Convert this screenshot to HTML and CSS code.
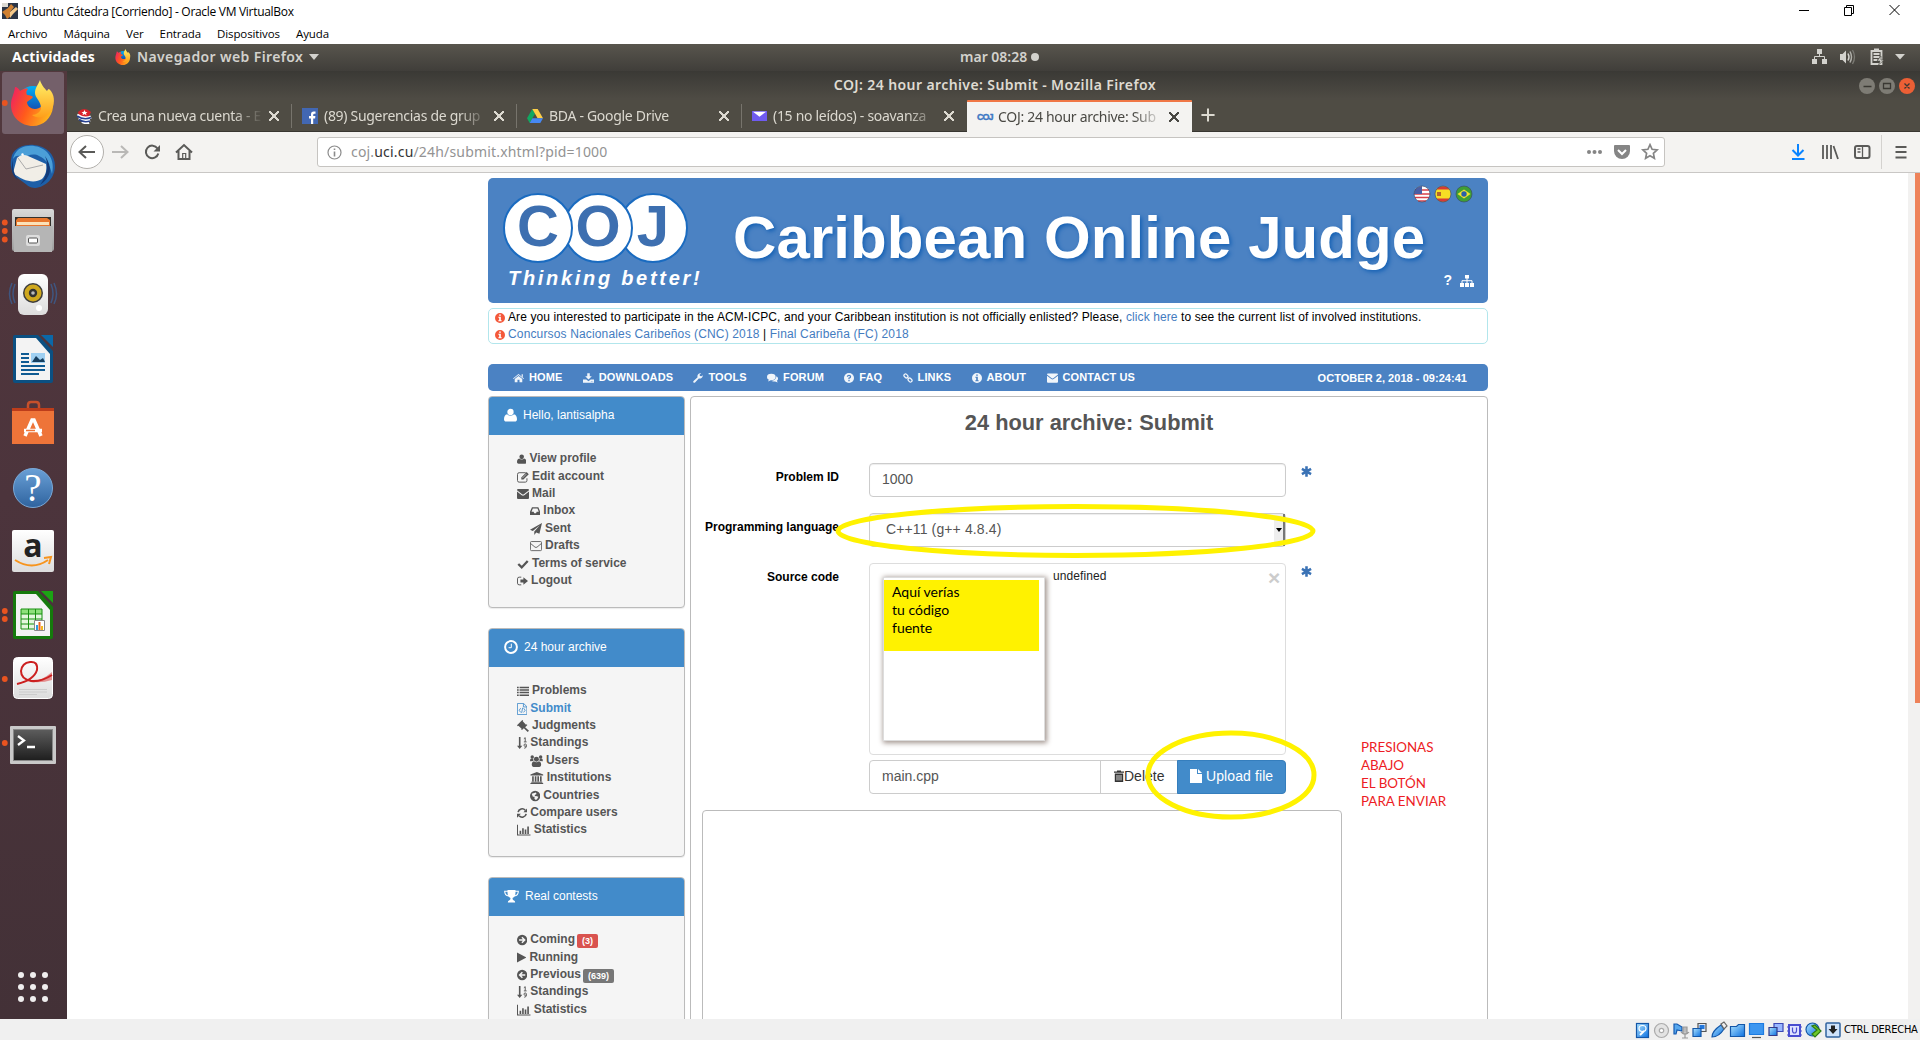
FILE: index.html
```html
<!DOCTYPE html>
<html lang="es">
<head>
<meta charset="utf-8">
<title>COJ: 24 hour archive: Submit</title>
<link rel="stylesheet" href="styles.css">
</head>
<body>
<svg class="sprite" aria-hidden="true">
  <defs>
    <linearGradient id="gf" x1="0" y1="0.2" x2="1" y2="0.6"><stop offset="0" stop-color="#f0245e"/><stop offset=".45" stop-color="#ff5a1c"/><stop offset="1" stop-color="#ffb81c"/></linearGradient>
    <linearGradient id="gy" x1="0" y1="0" x2="0" y2="1"><stop offset="0" stop-color="#fff36a"/><stop offset="1" stop-color="#ff9f1a"/></linearGradient>
    <linearGradient id="gb" x1="0" y1="0" x2="0" y2="1"><stop offset="0" stop-color="#00b1f6"/><stop offset="1" stop-color="#1c2f9c"/></linearGradient>
    <linearGradient id="gg" x1="0" y1="0" x2="0" y2="1"><stop offset="0" stop-color="#d9d9d9"/><stop offset="1" stop-color="#9c9c9c"/></linearGradient>
    <linearGradient id="gw" x1="0" y1="0" x2="0" y2="1"><stop offset="0" stop-color="#fff"/><stop offset="1" stop-color="#dcdcdc"/></linearGradient>
    <linearGradient id="gh" x1="0" y1="0" x2="0" y2="1"><stop offset="0" stop-color="#6aa0d6"/><stop offset="1" stop-color="#2f639f"/></linearGradient>
    <linearGradient id="gv" x1="0" y1="0" x2="1" y2="1"><stop offset="0" stop-color="#aee4ff"/><stop offset="1" stop-color="#0b6fe0"/></linearGradient>
    <linearGradient id="gt" x1="0" y1="0" x2="0" y2="1"><stop offset="0" stop-color="#5c5c5c"/><stop offset="1" stop-color="#1f1f1f"/></linearGradient>
  </defs>
  <symbol id="firefox" viewBox="0 0 44 46">
    <circle cx="22" cy="22" r="16" fill="url(#gb)"/>
    <path d="M4 7c2 0 4 2 5 4 3-2 6-3 8-2-2 2-2 4-1 6 3 0 5 1 6 2-1 2-4 3-6 5 0 4 4 7 8 7 5 0 9-4 8-9l-1-12 6 4c4 5 6 10 5 15-1 11-10 19-20 19C10 46 0 37 0 25 0 18 3 15 4 7z" fill="url(#gf)"/>
    <path d="M29 0c-2 5-5 8-5 13 0 5 6 8 6 15 0 4-5 7-9 7 6 5 16 2 20-6 3-6 3-15-3-20-1 0-2 2-2 2S30 5 29 0z" fill="url(#gy)"/>
  </symbol>
  <symbol id="user" viewBox="0 0 14 14"><circle cx="7" cy="3.8" r="3.4"/><path d="M3.4 6.3C5 8.4 9 8.4 10.600 6.300 13 6.700 14 9 14 11.500c0 1.500-1 2.500-2.300 2.500H2.300C1 14 0 13 0 11.500 0 9 1 6.700 3.400 6.300z"/></symbol>
  <symbol id="edit" viewBox="0 0 14 14"><path d="M10.200 2H2.500A1.900 1.900 0 0 0 .6 3.900v7.200A1.900 1.900 0 0 0 2.500 13h7.200a1.900 1.900 0 0 0 1.900-1.900V8.500" fill="none" stroke="currentColor" stroke-width="1.100"/><path d="M5 10V7.500L11.200 1.300l2.500 2.500L7.500 10z"/><path d="M6.300 8.300l4.600-4.700" stroke="#f5f5f5" stroke-width=".7"/></symbol>
  <symbol id="mail" viewBox="0 0 14 12"><path d="M0 1.500Q0 .3 1.200.3h11.600Q14 .3 14 1.500L8 6.200q-1 .7-2 0z"/><path d="M0 3.200l5.500 4.200q1.500 1 3 0L14 3.200v7.500q0 1.200-1.200 1.200H1.200Q0 11.900 0 10.700z"/></symbol>
  <symbol id="mailo" viewBox="0 0 14 12"><rect x=".5" y=".8" width="13" height="10.600" rx="1.200" fill="none" stroke="currentColor"/><path d="M.6 3l5.200 4.300q1.200.8 2.400 0L13.400 3" fill="none" stroke="currentColor"/></symbol>
  <symbol id="inbox" viewBox="0 0 12 12"><path fill-rule="evenodd" d="M2.300 1.500h7.400L12 7v3.700H0V7zm1 1.500L1.800 7h2.400l.8 1.600h2L7.800 7h2.400L8.700 3z"/></symbol>
  <symbol id="plane" viewBox="0 0 14 14"><path d="M14 0L0 8l3.300 1.400L11.500 2.500 5 10v4l2.200-3 3.800 1.500z"/></symbol>
  <symbol id="check" viewBox="0 0 14 12"><path d="M1.500 6l4 4 7-7.500" fill="none" stroke="currentColor" stroke-width="2.700"/></symbol>
  <symbol id="signout" viewBox="0 0 13 12"><path d="M5 1.500H2.500Q.6 1.500.6 3.500v5q0 2 1.900 2H5" fill="none" stroke="currentColor" stroke-width="1.100"/><path d="M4 4.200h3.500V1.500L13 6l-5.500 4.500V7.800H4z"/></symbol>
  <symbol id="clock" viewBox="0 0 14 14"><circle cx="7" cy="7" r="5.900" fill="none" stroke="currentColor" stroke-width="2"/><path d="M7.300 3.700v4H4.600" fill="none" stroke="currentColor"/></symbol>
  <symbol id="list" viewBox="0 0 14 12"><path d="M0 1h2v1.700H0zM3 1h11v1.700H3zM0 4h2v1.700H0zM3 4h11v1.700H3zM0 7h2v1.700H0zM3 7h11v1.700H3zM0 10h2v1.700H0zM3 10h11v1.700H3z"/></symbol>
  <symbol id="code" viewBox="0 0 12 14"><path d="M.5.5h7.200l3.800 3.800v9.200H.5zM7.500.6v4h4M4.300 6L2.500 8.500 4.300 11M7.700 6l1.800 2.500L7.700 11M6.600 5.500l-1.200 6" fill="none" stroke="currentColor"/></symbol>
  <symbol id="gavel" viewBox="0 0 14 14"><path d="M0 6.200L6.200 0l1 1-.5.600 3.800 3.800.6-.5 1 1-2.600 2.600 4.500 4L12.500 14 8 9.700l-2.200 2-1-1 .6-.5L1.600 6.600l-.6.6z"/></symbol>
  <symbol id="sort" viewBox="0 0 12 14"><path d="M2.200 0h1.900v10.200h2.100L3.100 14 0 10.200h2.200z"/><path d="M8 2l1.600-1.200V5.500M8 5.700h3.200M11 10.400q-2.800 1.300-2.800-.8 0-1.500 1.400-1.500 1.500 0 1.500 2 0 3-2.700 3" fill="none" stroke="currentColor" stroke-width="1.100"/></symbol>
  <symbol id="users" viewBox="0 0 15 14"><circle cx="7.500" cy="5" r="2.900"/><path d="M4.600 7.300q2.900 2.200 5.800 0 2.600.5 2.600 4.200 0 2.500-2 2.500H4q-2 0-2-2.500 0-3.700 2.600-4.200z"/><circle cx="2.600" cy="2.400" r="2"/><circle cx="12.400" cy="2.400" r="2"/><path d="M0 7.200Q0 4.200 1.200 4.200h2.500L4 7zM15 7.200q0-3-1.200-3h-2.500L11 7z"/></symbol>
  <symbol id="bank" viewBox="0 0 15 14"><path d="M7.500 0L15 3v1H0V3zM2 5h1.900v6H2zM5.100 5H7v6H5.100zM8.100 5H10v6H8.100zM11.200 5h1.900v6h-1.900zM1 11.400h13v1H1zM0 12.800h15V14H0z"/></symbol>
  <symbol id="globe" viewBox="0 0 12 12"><path fill-rule="evenodd" d="M6 0a6 6 0 1 1 0 12A6 6 0 0 1 6 0zM2 3.500l1.200 3 2.200.7-.3 1.800 1 1.500 2-.3L9.800 7 7 6l-1.800.3L6 4.500l1.700-.8-1-1.700z"/></symbol>
  <symbol id="refresh" viewBox="0 0 12 12"><path d="M1.300 5A4.800 4.800 0 0 1 9.600 2.700M10.700 7a4.800 4.800 0 0 1-8.300 2.300" fill="none" stroke="currentColor" stroke-width="1.900"/><path d="M12 .5V5H7.500zM0 11.500V7h4.500z"/></symbol>
  <symbol id="bars" viewBox="0 0 16 14"><path d="M.6 1v11.800H16" fill="none" stroke="currentColor" stroke-width="1.200"/><path d="M3 8h1.900v3.600H3zM6 5h1.900v6.600H6zM9 6.500h1.900v5.100H9zM12 3h1.900v8.600H12z"/></symbol>
  <symbol id="trophy" viewBox="0 0 15 14"><path d="M3.500 1h8v2.500q0 4.500-3 5.500 0 2 1 2.300 1.700.2 1.700 2.200H3.800q0-2 1.700-2.200 1-.3 1-2.300-3-1-3-5.500z"/><path d="M4 2.300H.7q0 4.200 4 4.700M11 2.300h3.300q0 4.200-4 4.700" fill="none" stroke="currentColor" stroke-width="1.100"/></symbol>
  <symbol id="next" viewBox="0 0 12 12"><circle cx="6" cy="6" r="6"/><path d="M2.400 6h6.200M5.700 2.700L9 6 5.700 9.300" fill="none" stroke="#f5f5f5" stroke-width="1.700"/></symbol>
  <symbol id="prev" viewBox="0 0 12 12"><circle cx="6" cy="6" r="6"/><path d="M9.600 6H3.400M6.300 2.700L3 6l3.300 3.300" fill="none" stroke="#f5f5f5" stroke-width="1.700"/></symbol>
  <symbol id="play" viewBox="0 0 11 12"><path d="M0 0l11 6-11 6z"/></symbol>
  <symbol id="home" viewBox="0 0 14 12"><path d="M7 .8l7 5.700-.7.900L7 2.300.7 7.400 0 6.500zM11 1.300h1.500V5L11 3.700z"/><path d="M2.200 7.200L7 3.300l4.800 3.900v4.300H8.300V8.200H5.700v3.300H2.200z"/></symbol>
  <symbol id="download" viewBox="0 0 14 12"><path d="M5.400 0h3.200v3.800h2.600L7 8 2.800 3.800h2.600z"/><path fill-rule="evenodd" d="M0 7.800h4.200L7 10l2.800-2.200H14V12H0zm10 2.500h1.200v.9H10zm2 0h1v.9h-1z"/></symbol>
  <symbol id="wrench" viewBox="0 0 13 13"><path d="M12.700 3.300A3.900 3.900 0 0 1 7.500 7L2.700 12.300Q1.500 13.200.6 12.300-.2 11.300.7 10.300L6 5.500A3.900 3.900 0 0 1 9.700.3l1 .2L8.600 2l.3 2 2 .3 1.700-1.500z"/></symbol>
  <symbol id="chat" viewBox="0 0 14 12"><ellipse cx="5.500" cy="4.700" rx="5.500" ry="4"/><path d="M2.500 7.500L1.500 10.300 5.500 8.500z"/><path d="M12 3.800c3 2 2.200 4.500.6 5.700l1 2.300-3.300-1.400Q7 11 5 9.600 11.500 9.200 12 3.800z"/></symbol>
  <symbol id="quest" viewBox="0 0 12 12"><circle cx="6" cy="6" r="6"/><path d="M4 4.500Q4.200 2.800 6 2.800t1.900 1.600Q7.900 5.500 6 6.200V7.500" fill="none" stroke="#4b82c3" stroke-width="1.500"/><path d="M5.200 8.400h1.600V10H5.200z" fill="#4b82c3"/></symbol>
  <symbol id="link" viewBox="0 0 13 13"><g fill="none" stroke="currentColor" stroke-width="1.600"><rect x="-2.600" y="-2" width="5.600" height="4" rx="1.900" transform="translate(3.700 3.700) rotate(45)"/><rect x="-3" y="-2" width="5.600" height="4" rx="1.900" transform="translate(9.300 9.300) rotate(45)"/><path d="M5 5l3 3"/></g></symbol>
  <symbol id="info" viewBox="0 0 12 12"><path fill-rule="evenodd" d="M6 0a6 6 0 1 1 0 12A6 6 0 0 1 6 0zM5 1.700v1.700h2V1.700zM4 4.600v1.200h1v3H4V10h4V8.800H7V4.600z"/></symbol>
  <symbol id="sitemap" viewBox="0 0 14 12"><path d="M5 0h4v3.500H5zM0 8h4v4H0zM5 8h4v4H5zM10 8h4v4h-4z"/><path d="M7 3v5M2 8V5.700h10V8" fill="none" stroke="currentColor"/></symbol>
  <symbol id="aster" viewBox="0 0 12 12"><path d="M6 .3v11.400M1 3.200l10 5.600M11 3.200L1 8.800" fill="none" stroke="currentColor" stroke-width="2.800"/></symbol>
</svg>

<header class="vm">
  <div class="vm-title">
    <svg width="16" height="16" viewBox="0 0 16 16"><rect width="16" height="16" fill="#2b3546"/><path d="M0 9l6-4 3-4 3 3-4 5 1 4-4 3-2-4z" fill="#d08030"/><path d="M8 9l6-5 2 2-5 5-3 4z" fill="#f5c98a"/><path d="M0 0h6v4H0z" fill="#dcd9d2"/></svg>
    <span>Ubuntu Cátedra [Corriendo] - Oracle VM VirtualBox</span>
    <svg class="vm-btns" width="102" height="14" viewBox="0 0 102 14"><g fill="none" stroke="#000"><path d="M0 7.500h10M45.500 4.500h7v8h-7zM47.500 4.500v-2h7v8h-2M90.500 2l10 10M100.500 2l-10 10"/></g></svg>
  </div>
  <nav class="vm-menu"><span>Archivo</span><span>Máquina</span><span>Ver</span><span>Entrada</span><span>Dispositivos</span><span>Ayuda</span></nav>
</header>

<div class="gnome">
  <div class="g-left"><b>Actividades</b><svg width="16" height="16"><use href="#firefox"/></svg><span class="app">Navegador web Firefox</span><i class="caret"></i></div>
  <div class="g-mid">mar 08:28<i class="dot"></i></div>
  <svg class="g-right" width="94" height="18" viewBox="0 0 94 18">
    <g fill="#d3d2cd"><path d="M5 1h5v5H5zM0 11h5v5H0zM10 11h5v5h-5z"/><path d="M7.500 6v3M2.500 11V8.500h10V11" fill="none" stroke="#d3d2cd"/>
    <path d="M28 6h2.500L34 2.500v13L30.500 12H28z"/><path d="M36 5.500q2 3.500 0 7" fill="none" stroke="#d3d2cd" stroke-width="1.500"/><path d="M38 3.500q3 5.500 0 11" fill="none" stroke="#b0afa9" stroke-width="1.500"/><path d="M40.500 2q4 7 0 14" fill="none" stroke="#7b7a74" stroke-width="1.300"/>
    <path d="M59.500 3h10v13h-10zM62 1.500h5M61.500 6h6M61.500 9h6M61.500 12h4" fill="none" stroke="#d3d2cd" stroke-width="1.800"/><path d="M69 8l-4 5h3l-1.500 4L72 12h-3z" stroke="#4b4943" stroke-width=".6"/>
    <path d="M83 6h10l-5 5.500z"/></g>
  </svg>
</div>

<div class="desktop">
<aside class="dock">
  <svg width="67" height="947" viewBox="0 72 67 947">
    <rect x="2" y="72" width="62" height="62" rx="3" fill="#74606a"/>
    <g fill="#e95420"><circle cx="4.800" cy="103" r="2.900"/><circle cx="4.800" cy="222.500" r="2.900"/><circle cx="4.800" cy="231" r="2.900"/><circle cx="4.800" cy="239.500" r="2.900"/><circle cx="4.800" cy="611" r="2.900"/><circle cx="4.800" cy="619" r="2.900"/><circle cx="4.800" cy="679" r="2.900"/><circle cx="4.800" cy="743" r="2.900"/></g>
    <use href="#firefox" x="11" y="80" width="44" height="46"/>
    <g><path d="M12 155c3-7 12-11 22-10 13 1 21 10 21 21 0 12-9 21-20 22-5 0-8-3-8-3l-12-9c-5-6-5-14-3-21z" fill="#1d5fa8"/><path d="M21 148c7-4 19-3 26 4 5 6 7 12 5 22-2-9-6-15-13-18-5-3-12-1-16 3l-3-3c-3-1-5 0-7 3 1-5 4-9 8-11z" fill="#4b9fd8"/><path d="M13 173l4-15c3-3 7-4 11-2l18 8c1 6 0 11-4 15-8 5-19 2-29-6z" fill="#f1eee7"/><path d="M18 158l8 11 17-4" fill="none" stroke="#aaa" stroke-width="1"/><path d="M13 160q-1 12 5 20-9-6-5-20zM45 156q6 14-5 29 17-12 5-29z" fill="#123a78"/><circle cx="22.500" cy="154.500" r="1.200" fill="#fff"/></g>
    <g><rect x="12" y="209" width="42" height="42" rx="2" fill="url(#gg)"/><rect x="15" y="217" width="36" height="10" fill="#33302c"/><path d="M16 220l2-2h29l3 2v7H16z" fill="#e8762c"/><path d="M17 222h32v3H17z" fill="#fbe1b8"/><path d="M13 226h40l-1 26H14z" fill="#b5b5b5"/><rect x="26" y="235" width="14" height="11" rx="2" fill="#ddd"/><rect x="28.500" y="238" width="9" height="5" rx="1" fill="#fff" stroke="#555"/></g>
    <g><path d="M12 283q-5 11 0 21M15 284q-4 10 0 19M54 283q5 11 0 21M51 284q4 10 0 19" fill="none" stroke="#3f5680" stroke-width="1.500"/><rect x="18" y="274" width="30" height="41" rx="6" fill="url(#gw)"/><circle cx="33" cy="293" r="10" fill="#3d3d3d"/><circle cx="33" cy="293" r="8.500" fill="#cfa81e"/><circle cx="33" cy="293" r="4.200" fill="#333"/><circle cx="33" cy="293" r="1.800" fill="#bbb"/><circle cx="39" cy="308" r="3" fill="#fff"/></g>
    <g><path d="M13 337q0-2 2-2h23l15 16v30q0 2-2 2H15q-2 0-2-2z" fill="#0b5082"/><path d="M16 338h20l14 16v26H16z" fill="#f3f3f3"/><path d="M41 335h12v12z" fill="#0b68a8"/><path d="M21 354h8M21 358h8M21 362h8M21 366h24M21 370h24M21 374h18" stroke="#0f5b93" stroke-width="2"/><path d="M31 353h14v10H31z" fill="#9fd0f2"/><path d="M32 362l4-6 4 4 3-2 2 4z" fill="#173f5f"/></g>
    <g><path d="M28 411v-6q0-3 3-3h5q3 0 3 3v6" fill="none" stroke="#c7502b" stroke-width="2.500"/><path d="M12 408h42v4H12z" fill="#bd3d1b"/><path d="M12 411h42v33H12z" fill="#ee7439"/><path d="M25 436l7-16h2l7 16M24 430.500h18" fill="none" stroke="#fff" stroke-width="3.500"/><path d="M26 430.500h9" stroke="#ee7439" stroke-width="1.500"/></g>
    <g><circle cx="33" cy="488" r="19.500" fill="url(#gh)" stroke="#7aa9d8"/><text x="33" y="501" text-anchor="middle" class="q">?</text></g>
    <g><rect x="12" y="530" width="42" height="42" rx="2" fill="url(#gw)"/><text x="33" y="557" text-anchor="middle" class="a">a</text><path d="M15 560q17 11 33 0M44 558l7-1-2 7" fill="none" stroke="#f7941d" stroke-width="2"/></g>
    <g><path d="M13 593q0-2 2-2h23l15 16v30q0 2-2 2H15q-2 0-2-2z" fill="#157a0c"/><path d="M16 594h20l14 16v26H16z" fill="#f3f3f3"/><path d="M41 591h12v12z" fill="#1ca414"/><path d="M21 609h21v20H21z" fill="#e5f7df"/><path d="M21 609h21v5H21z" fill="#8fe07c"/><path d="M21 609h21v20H21zM28.500 609v20M35.500 609v20M21 614h21M21 619h21M21 624h21" fill="none" stroke="#189010"/><path d="M34.500 620.500h10v10h-10z" fill="#fff" stroke="#888"/><path d="M36 625h2v5h-2z" fill="#2f9be0"/><path d="M38.500 622h2v8h-2z" fill="#f0641e"/><path d="M41 626h2v4h-2z" fill="#f4b81e"/></g>
    <g><rect x="13.500" y="657.500" width="39" height="41" rx="4" fill="url(#gw)" stroke="#fff"/><path d="M24 681q13 4 28-9v8q-12 4-28 1z" fill="#e05050" opacity=".6"/><path d="M17 684q17-4 20-14 1-9-7-8-8 1-9 9 0 8 10 10 10 1 21-6" fill="none" stroke="#cc2020" stroke-width="2"/><path d="M19 689.500h28M19 692h28M19 694.500h18" stroke="#ccc"/></g>
    <g><rect x="10" y="726" width="46" height="38" rx="1" fill="#c9c9c9"/><rect x="13" y="729" width="40" height="32" fill="#888"/><rect x="14" y="730" width="38" height="30" fill="url(#gt)"/><path d="M18 736l6 4.500-6 4.500M27 747h8" fill="none" stroke="#fff" stroke-width="2.300"/></g>
    <g fill="#f0eeee"><circle cx="21" cy="975" r="3"/><circle cx="33" cy="975" r="3"/><circle cx="45" cy="975" r="3"/><circle cx="21" cy="987" r="3"/><circle cx="33" cy="987" r="3"/><circle cx="45" cy="987" r="3"/><circle cx="21" cy="999" r="3"/><circle cx="33" cy="999" r="3"/><circle cx="45" cy="999" r="3"/></g>
  </svg>
</aside>

<section class="browser">
  <div class="titlebar"><span>COJ: 24 hour archive: Submit - Mozilla Firefox</span>
    <svg width="58" height="18" viewBox="0 0 58 18"><circle cx="9" cy="9" r="8" fill="#7e7c75"/><circle cx="29" cy="9" r="8" fill="#7e7c75"/><circle cx="49" cy="9" r="8" fill="#ec5f35"/><path d="M5.500 9.500h8M25.500 6.500h7v5h-7zM46.500 6.500l5 5M51.500 6.500l-5 5" fill="none" stroke="#3a3833" stroke-width="1.300"/></svg>
  </div>
  <div class="tabs">
    <div class="tab"><svg width="15" height="16" viewBox="0 0 15 16"><path d="M1 4q6-6 13 0l-3 6q-5 1-9-2z" fill="#d9232b"/><path d="M7.500 2l1 2h2L9 5.300l.5 2-2-1.200-2 1.200.5-2L4.500 4h2z" fill="#fff"/><path d="M0 7q7 5 14 2M2 10q6 4 11 2M5 13.500q4 2 7 1" fill="none" stroke="#fff" stroke-width="3"/><path d="M0 8q7 4.500 14 1.500M2 11.500q5 3.500 11 1.500" fill="none" stroke="#27408f" stroke-width="1.600"/></svg><span>Crea una nueva cuenta - E</span><i class="x"></i></div>
    <div class="tab"><svg width="16" height="16" viewBox="0 0 16 16"><path d="M0 0h16v16H0z" fill="#4267b2"/><path d="M9 16v-5.500H7V8h2V6.300Q9 3.500 11.700 3.500H13.500v2.300H12.300q-1.100 0-1.100 1.100V8h2.200l-.3 2.500h-1.900V16z" fill="#fff"/></svg><span>(89) Sugerencias de grup</span><i class="x"></i></div>
    <div class="tab"><svg width="16" height="14" viewBox="0 0 16 14"><path d="M5.300 0L0 9.300 2.700 14 8 4.700z" fill="#11a861"/><path d="M5.300 0h5.400L16 9.300h-5.400z" fill="#ffcf48"/><path d="M2.700 14l2.700-4.700H16L13.300 14z" fill="#4688f4"/></svg><span>BDA - Google Drive</span><i class="x"></i></div>
    <div class="tab last"><svg width="15" height="10" viewBox="0 0 15 10"><path d="M0 0h15v10H0z" fill="#6f5bf0"/><path d="M1 .7h13L7.500 5.800z" fill="#fff"/></svg><span>(15 no leídos) - soavanza</span><i class="x"></i></div>
    <div class="tab active"><em>COJ</em><span>COJ: 24 hour archive: Sub</span><i class="x"></i></div>
    <i class="plus"></i>
  </div>
  <div class="toolbar">
    <svg width="138" height="40" viewBox="67 132 138 40"><g fill="none" stroke="#5a5a58" stroke-width="2"><circle cx="87" cy="152" r="16.500" fill="#fff" stroke="#b2b0ac" stroke-width="1"/><path d="M95 152H80M86 146l-6.500 6 6.500 6"/><path d="M112 152h15M121 146l6.500 6-6.500 6" stroke="#b9b8b6"/><path d="M157.500 148.500a6.300 6.300 0 1 0 .8 5"/><path d="M160 145v6.500h-6.500z" fill="#5a5a58" stroke="none"/><path d="M176 152.500l8-7.500 8 7.500M178.500 151v8h11v-8"/><path d="M182.700 153.500h3v5h-3z" stroke-width="1.200"/></g></svg>
    <div class="url"><svg width="15" height="15" viewBox="0 0 15 15"><circle cx="7.500" cy="7.500" r="6.500" fill="none" stroke="#8b8b8b" stroke-width="1.200"/><path d="M7.500 6.500v5M7.500 3.500v1.600" stroke="#8b8b8b" stroke-width="1.600"/></svg><span>coj.<b>uci.cu</b>/24h/submit.xhtml?pid=1000</span>
      <svg class="acts" width="74" height="18" viewBox="0 0 74 18"><g fill="#858585"><circle cx="3" cy="9" r="2"/><circle cx="8.500" cy="9" r="2"/><circle cx="14" cy="9" r="2"/><path d="M29 2h14q1 0 1 1v5a8 8 0 0 1-16 0V3q0-1 1-1z"/><path d="M32 7l4 4 4-4" fill="none" stroke="#fff" stroke-width="2"/><path d="M64 1.700l2.100 4.600 5 .6-3.700 3.400 1 5-4.400-2.500-4.400 2.500 1-5-3.700-3.400 5-.6z" fill="none" stroke="#858585" stroke-width="1.700"/></g></svg>
    </div>
    <svg class="tools" width="128" height="40" viewBox="1785 132 128 40"><g fill="none" stroke="#5a5a58" stroke-width="2"><path d="M1798 144v11M1792.500 150l5.500 5.500 5.500-5.500M1792 159h12.500" stroke="#0a84ff"/><path d="M1823 145v14M1827 145v14M1831 145v14M1833.500 146l4.500 13" stroke-width="1.800"/><rect x="1855" y="146" width="14.500" height="12" rx="2"/><path d="M1862.500 146v12M1857.500 149h3M1857.500 152h3" stroke-width="1.300"/><path d="M1881.500 135v34" stroke="#d4d2cf" stroke-width="1"/><path d="M1895.500 147h11M1895.500 152h11M1895.500 157.500h11"/></g></svg>
  </div>

  <div class="viewport">
   <main class="page">
    <div class="banner">
      <div class="brand">
        <div class="rings"><i class="c1">C</i><i class="c2">O</i><i class="c3">J</i></div>
        <div class="motto">Thinking better!</div>
      </div>
      <h1>Caribbean Online Judge</h1>
      <div class="corner">
        <svg width="60" height="18" viewBox="0 0 60 18"><g><circle cx="9" cy="9" r="8" fill="#fff"/><path d="M2 5h14M1 9h16M2 12.500h14M5 16h8" stroke="#d8404a" stroke-width="1.700"/><path d="M9 1v8H1q0-7 8-8z" fill="#4a5fa5"/></g><g><circle cx="30" cy="9" r="8" fill="#f6df25"/><path d="M23.500 4.500a8 8 0 0 1 13 0zM23.500 13.500a8 8 0 0 0 13 0z" fill="#d63b35"/><path d="M24 7h4v4h-4z" fill="#b3652c"/></g><g><circle cx="51" cy="9" r="8" fill="#3f9e35"/><path d="M44.500 9L51 4.500 57.500 9 51 13.500z" fill="#f2e22d"/><circle cx="51" cy="9" r="2.700" fill="#2b5fa8"/></g><g fill="none" stroke="#3b4a66" stroke-opacity=".65"><circle cx="9" cy="9" r="8"/><circle cx="30" cy="9" r="8"/><circle cx="51" cy="9" r="8"/></g></svg>
        <div class="help"><b>?</b><svg width="14" height="12"><use href="#sitemap"/></svg></div>
      </div>
    </div>
    <div class="notice">
      <p><svg width="10" height="10"><use href="#info"/></svg>Are you interested to participate in the ACM-ICPC, and your Caribbean institution is not officially enlisted? Please, <a>click here</a> to see the current list of involved institutions.</p>
      <p><svg width="10" height="10"><use href="#info"/></svg><a>Concursos Nacionales Caribeños (CNC) 2018</a> | <a>Final Caribeña (FC) 2018</a></p>
    </div>
    <nav class="menu">
      <span><svg width="11" height="10"><use href="#home"/></svg>HOME</span><span><svg width="11" height="10"><use href="#download"/></svg>DOWNLOADS</span><span><svg width="10" height="10"><use href="#wrench"/></svg>TOOLS</span><span><svg width="11" height="10"><use href="#chat"/></svg>FORUM</span><span><svg width="10" height="10"><use href="#quest"/></svg>FAQ</span><span><svg width="10" height="10"><use href="#link"/></svg>LINKS</span><span><svg width="10" height="10"><use href="#info"/></svg>ABOUT</span><span><svg width="11" height="10"><use href="#mail"/></svg>CONTACT US</span>
      <time>OCTOBER 2, 2018 - 09:24:41</time>
    </nav>
    <div class="cols">
      <aside class="side">
        <section class="panel p1"><h2><svg width="13" height="14"><use href="#user"/></svg>Hello, lantisalpha</h2>
          <ul>
            <li><svg width="9.400" height="12"><use href="#user"/></svg>View profile</li>
            <li><svg width="12" height="12"><use href="#edit"/></svg>Edit account</li>
            <li><svg width="12" height="12"><use href="#mail"/></svg>Mail</li>
            <li class="sub"><svg width="10.300" height="12"><use href="#inbox"/></svg>Inbox</li>
            <li class="sub"><svg width="12" height="12"><use href="#plane"/></svg>Sent</li>
            <li class="sub"><svg width="12" height="12"><use href="#mailo"/></svg>Drafts</li>
            <li><svg width="12" height="12"><use href="#check"/></svg>Terms of service</li>
            <li><svg width="11.100" height="12"><use href="#signout"/></svg>Logout</li>
          </ul></section>
        <section class="panel p2"><h2><svg width="14" height="14"><use href="#clock"/></svg>24 hour archive</h2>
          <ul>
            <li><svg width="12" height="12"><use href="#list"/></svg>Problems</li>
            <li class="on"><svg width="10.300" height="12"><use href="#code"/></svg>Submit</li>
            <li><svg width="12" height="12"><use href="#gavel"/></svg>Judgments</li>
            <li><svg width="10.300" height="12"><use href="#sort"/></svg>Standings</li>
            <li class="sub"><svg width="12.900" height="12"><use href="#users"/></svg>Users</li>
            <li class="sub"><svg width="13.700" height="12"><use href="#bank"/></svg>Institutions</li>
            <li class="sub"><svg width="10.300" height="12"><use href="#globe"/></svg>Countries</li>
            <li><svg width="10.300" height="12"><use href="#refresh"/></svg>Compare users</li>
            <li><svg width="13.700" height="12"><use href="#bars"/></svg>Statistics</li>
          </ul></section>
        <section class="panel p3"><h2><svg width="15" height="14"><use href="#trophy"/></svg>Real contests</h2>
          <ul>
            <li><svg width="10.300" height="12"><use href="#next"/></svg>Coming<mark class="red">(3)</mark></li>
            <li><svg width="9.400" height="11"><use href="#play"/></svg>Running</li>
            <li><svg width="10.300" height="12"><use href="#prev"/></svg>Previous<mark>(639)</mark></li>
            <li><svg width="10.300" height="12"><use href="#sort"/></svg>Standings</li>
            <li><svg width="13.700" height="12"><use href="#bars"/></svg>Statistics</li>
          </ul></section>
      </aside>
      <section class="content">
        <h3>24 hour archive: Submit</h3>
        <div class="row"><label>Problem ID</label><div class="field">1000</div><svg width="11" height="11"><use href="#aster"/></svg></div>
        <div class="row"><label>Programming language</label><div class="field select">C++11 (g++ 4.8.4)<span class="arrow"><i></i></span></div></div>
        <div class="row"><label>Source code</label>
          <div class="upload">
            <div class="preview"><div class="thumb"><div class="note">Aquí verías<br>tu código<br>fuente</div></div><span>undefined</span><b>×</b></div>
            <div class="group"><div class="name">main.cpp</div><div class="del"><svg width="10" height="12" viewBox="0 0 10 12"><path d="M3 1.500V.4h4v1.100h3v1.200H0V1.500zM.8 3.500h8.400V12H.8z"/><path d="M3 5v5.500M5 5v5.500M7 5v5.500" stroke="#fff" stroke-width=".8"/></svg>Delete</div><div class="up"><svg width="12" height="14" viewBox="0 0 12 14"><path d="M0 0h7v5h5v9H0z"/><path d="M8 0l4 4H8z"/></svg>Upload file</div></div>
          </div><svg width="11" height="11"><use href="#aster"/></svg></div>
        <div class="editor"></div>
      </section>
    </div>
   </main>
   <div class="scroll"><i></i></div>
  </div>
</section>
</div>

<footer class="status">
  <svg width="190" height="18" viewBox="1635 1020 190 18">
    <g stroke-width="1.200"><rect x="1636.500" y="1022.500" width="12" height="14" fill="url(#gv)" stroke="#1457a8"/><ellipse cx="1642.500" cy="1027.500" rx="3.500" ry="3" fill="none" stroke="#fff"/><path d="M1640 1034l4-4" stroke="#fff" stroke-width="2"/>
    <circle cx="1661.500" cy="1029.500" r="7" fill="#e3e3e3" stroke="#aaa"/><circle cx="1661.500" cy="1029.500" r="2.200" fill="#fff" stroke="#aaa"/>
    <path d="M1674 1023h3l5 3v4l-5-1-1 4h-2z" fill="#58a8ee" stroke="#1559b0"/><path d="M1683 1026h4v6h-4zM1681 1031q4 5 8 0M1685 1034v3M1682 1037h6" fill="#bbb" stroke="#999"/>
    <path d="M1698 1022.500h8v8h-8z" fill="#dfe8f5" stroke="#555"/><path d="M1699.500 1024h5v4h-5z" fill="#2277dd"/><path d="M1693 1027.500h8v8h-8z" fill="url(#gv)" stroke="#1457a8"/>
    <path d="M1712 1036q0-6 9-12l3 4q-5 8-12 8z" fill="url(#gv)" stroke="#1457a8"/><path d="M1721 1023l3-2 3 4-3 3z" fill="#eee" stroke="#666"/>
    <path d="M1730.500 1025.500h6l2-2h6v12h-14z" fill="url(#gv)" stroke="#1457a8"/>
    <path d="M1749.500 1022.500h14v11h-14z" fill="#3c96f0" stroke="#1d7be0"/><path d="M1752 1036.500h9" stroke="#555"/>
    <path d="M1774 1022.500h9v8h-9z" fill="#9ab8ff" stroke="#3b49b5"/><path d="M1769 1026.500h8v8h-8z" fill="url(#gv)" stroke="#333a88"/>
    <rect x="1789" y="1024" width="11" height="11" fill="#dfe3ff" stroke="#4a4ed0" stroke-width="2"/><path d="M1787 1026h1M1787 1030h1M1787 1034h1M1801 1026h1M1801 1030h1M1801 1034h1" stroke="#4a4ed0" stroke-width="1"/><path d="M1792.500 1026.500v3q0 2.500 2 2.500t2-2.500v-3" fill="none" stroke="#4a4ed0"/>
    <circle cx="1812.500" cy="1028.500" r="6.500" fill="url(#gv)" stroke="#1457a8"/><path d="M1812 1025l5 4-5 4 3 3 6-6-6-6z" fill="#6ec82a" stroke="#2d7a12"/></g>
  </svg>
  <svg width="16" height="18" viewBox="0 0 16 18"><rect x="1" y="2" width="14" height="14" rx="1" fill="#cfe3fa" stroke="#31639f" stroke-width="1.500"/><path d="M6 4.500h4V8h2.500L8 13 3.500 8H6z" fill="#222"/></svg>
  <span>CTRL DERECHA</span>
</footer>

<svg class="ink" width="1920" height="1040"><g fill="none" stroke="#fff200" stroke-width="5"><ellipse cx="1075.500" cy="531" rx="237.500" ry="24.500"/><ellipse cx="1231" cy="775" rx="83" ry="42"/></g></svg>
<p class="hint">PRESIONAS<br>ABAJO<br>EL BOTÓN<br>PARA ENVIAR</p>
</body>
</html>
```
FILE: styles.css
```css
* { box-sizing: border-box; }
body { margin: 0; width: 1920px; height: 1040px; overflow: hidden; position: relative; display: flex; flex-direction: column; background: #fff; font: 12px/17px "Liberation Sans", sans-serif; color: #000; }
h1, h2, h3, p, ul { margin: 0; padding: 0; }
i, em { font-style: normal; }
svg { fill: currentColor; flex: none; }
.sprite { position: absolute; width: 0; height: 0; }

/* VirtualBox window frame */
.vm { height: 44px; flex: none; font-family: "Open Sans", sans-serif; }
.vm-title { height: 22px; display: flex; align-items: center; padding: 0 19px 0 2px; gap: 5px; letter-spacing: -.3px; }
.vm-btns { margin-left: auto; margin-top: -2px; }
.vm-menu { display: flex; gap: 16px; padding: 3px 8px; font-size: 11.500px; letter-spacing: -.1px; }

/* GNOME shell */
.gnome { height: 27px; flex: none; display: grid; grid-template-columns: 948px auto 1fr; align-items: center; background: linear-gradient(#58554d, #403e3a); color: #d3d2cd; font: 600 14px/20px "Noto Sans", sans-serif; padding: 0 14px 1px 12px; }
.g-left { display: flex; align-items: center; }
.g-left b { color: #fff; margin-right: 20px; font-weight: 700; letter-spacing: .2px; }
.app { margin-left: 6px; letter-spacing: .38px; }
.caret { border: 5px solid transparent; border-top: 6px solid #d3d2cd; border-bottom: 0; margin-left: 6px; }
.g-mid { display: flex; align-items: center; gap: 4px; }
.dot { width: 8px; height: 8px; border-radius: 50%; background: #d3d2cd; }
.g-right { justify-self: end; }
.desktop { flex: 1; min-height: 0; display: flex; }
.dock { width: 67px; flex: none; background: linear-gradient(#52383d, #4c343c 45%, #433137); }
.dock svg { display: block; margin-top: 1px; }
.q { font: 39px "Liberation Serif", serif; fill: #fff; }
.a { font: bold 32px "Open Sans", sans-serif; fill: #222; }

/* Firefox chrome */
.browser { flex: 1; min-width: 0; display: flex; flex-direction: column; }
.titlebar { height: 29px; flex: none; display: flex; align-items: center; justify-content: flex-end; gap: 702px; padding-right: 4px; background: linear-gradient(#3a3935, #4e4b44 95%); color: #dfdbd2; font: 600 14px/20px "Noto Sans", sans-serif; white-space: nowrap; letter-spacing: .4px; }
.titlebar span { margin-top: -1px; }
.tabs { height: 32px; flex: none; display: flex; align-items: stretch; background: #4f4c44; border-bottom: 1px solid #383631; font: 14px/20px "Noto Sans", sans-serif; color: #dcd9d0; }
.tab { width: 225px; display: flex; align-items: center; gap: 6px; padding: 1px 10px 0; position: relative; }
.tab:not(.last):not(.active)::after { content: ""; position: absolute; right: 0; top: 4px; width: 1px; height: 24px; background: #77746c; }
.tab span { flex: 1; overflow: hidden; white-space: nowrap; letter-spacing: -.3px; -webkit-mask: linear-gradient(90deg, #000 82%, transparent 100%); mask: linear-gradient(90deg, #000 82%, transparent 100%); }
.tab.active { background: #f4f3f1; color: #4a4944; border-top: 2px solid #f07746; border-radius: 1px 1px 0 0; margin-bottom: -1px; padding-top: 0; }
.tab em { font: bold 9px/16px "Liberation Sans", sans-serif; color: #3d78c4; width: 15px; letter-spacing: -1px; -webkit-text-stroke: .4px #3d78c4; }
.x, .plus { width: 10px; height: 10px; margin-right: 3px; background: linear-gradient(45deg, transparent 44%, currentColor 44% 56%, transparent 56%), linear-gradient(-45deg, transparent 44%, currentColor 44% 56%, transparent 56%); }
.plus { margin: 10px 0 0 11px; transform: rotate(45deg); }
.toolbar { height: 41px; flex: none; display: flex; align-items: center; background: #f4f3f1; border-bottom: 1px solid #c9c7c5; padding-right: 7px; }
.url { width: 1348px; height: 30px; margin-left: 112px; border: 1px solid #c6c4c1; border-radius: 3px; background: #fff; display: flex; align-items: center; padding: 0 4px 0 9px; gap: 9px; font: 14px/20px "Noto Sans", sans-serif; color: #939393; letter-spacing: .18px; }
.url b { font-weight: 400; color: #333; }
.acts { margin-left: auto; }
.tools { margin-left: auto; }
.viewport { flex: 1; min-height: 0; overflow: hidden; display: flex; background: #fff; }
.page { width: 1000px; margin: 5px auto 0 421px; }
.scroll { width: 12px; background: #f2f1f0; display: flex; justify-content: flex-end; }
.scroll i { width: 5px; height: 530px; background: #ee8259; }

/* COJ header */
.banner { height: 125px; background: #4b82c3; border-radius: 5px; color: #fff; display: flex; padding-left: 15px; }
.brand { width: 231px; padding-top: 15px; }
.rings { display: flex; height: 70px; }
.rings i { width: 70px; height: 70px; border-radius: 50%; border: 2px solid #1a6bc0; background: #fff; color: #3d6fb0; font: bold 58px/61px "Liberation Sans", sans-serif; text-align: center; position: relative; }
.c1 { z-index: 3; }
.rings .c2 { z-index: 2; margin-left: -10px; }
.rings .c3 { z-index: 1; margin-left: -15px; }
.motto { font: italic bold 20px/24px "Liberation Sans", sans-serif; letter-spacing: 2.700px; margin-top: 3px; padding-left: 5px; white-space: nowrap; }
.banner h1 { font: bold 60px/68px "Liberation Sans", sans-serif; letter-spacing: .1px; margin-top: 26px; margin-left: -1px; text-shadow: 2px 2px 4px #1460b4; white-space: nowrap; width: 695px; flex: none; }
.corner { display: flex; flex-direction: column; justify-content: space-between; margin-left: -15px; padding: 7px 0 14px; }
.help { display: flex; align-items: center; justify-content: flex-end; gap: 8px; font-size: 14px; margin-right: -1px; }
.notice { height: 36px; margin-top: 5px; border: 1px solid #b2e6ec; border-radius: 5px; padding: 0 6px; letter-spacing: .1px; }
.notice p { display: flex; align-items: center; white-space: pre; }
.notice p + p { letter-spacing: .15px; }
.notice svg { color: #f4583a; margin-right: 3px; }
.notice a { color: #447cbf; }
.menu { height: 27px; margin-top: 20px; border-radius: 5px; background: #4b82c3; color: #fff; display: flex; align-items: center; gap: 20.300px; padding: 0 21px 2px 25px; font: bold 11px/14px "Liberation Sans", sans-serif; letter-spacing: .12px; white-space: nowrap; }
.menu span { display: flex; align-items: center; gap: 5px; }
.menu svg { margin-top: 2px; opacity: .92; }
.menu time { margin-left: auto; margin-top: 2px; letter-spacing: .04px; }
.cols { display: flex; gap: 5px; margin-top: 5px; }
.side { width: 197px; display: flex; flex-direction: column; gap: 20px; }
.panel { border: 1px solid #bbb; border-radius: 4px; background: #f5f5f5; box-shadow: 0 1px 1px rgba(0,0,0,.08); }
.p1 { height: 212px; }
.p2 { height: 229px; }
.p3 { height: 230px; }
.panel h2 { height: 38px; background: #428bca; color: #fff; border-radius: 3px 3px 0 0; font: 12px/17px "Liberation Sans", sans-serif; display: flex; align-items: center; gap: 6px; padding: 0 0 2px 15px; }
.panel ul { list-style: none; padding: 15px 0 0 28px; color: #555; font-weight: 700; }
.panel li { height: 17.400px; display: flex; align-items: center; gap: 3px; white-space: nowrap; }
.panel li svg { margin-top: 1px; }
.sub { padding-left: 13px; }
.on { color: #428bca; }
mark { background: #777; color: #fff; font: bold 9px/14px "Liberation Sans", sans-serif; border-radius: 2px; padding: 0 5px; margin: 3px 0 0 -1px; }
mark.red { background: #d9534f; }

/* submit form */
.content { width: 798px; height: 760px; border: 1px solid #bbb; border-radius: 4px; padding: 0 11px; }
.content h3 { font: bold 21.800px/28px "Liberation Sans", sans-serif; color: #555; text-align: center; margin-top: 12px; }
.row { display: flex; align-items: flex-start; margin-bottom: 16px; }
.content h3 + .row { margin-top: 26px; }
.row label { width: 137px; text-align: right; font-weight: 700; margin-right: 30px; padding-top: 6px; white-space: nowrap; }
.row > svg { color: #3a72b5; margin: 3px 0 0 15px; }
.field { width: 417px; height: 34px; border: 1px solid #ccc; border-radius: 4px; box-shadow: inset 0 1px 1px rgba(0,0,0,.075); font-size: 14px; line-height: 30px; color: #555; padding-left: 12px; }
.select { padding-left: 16px; display: flex; justify-content: space-between; letter-spacing: .12px; }
.arrow { width: 11px; background: #eee; border-right: 2px solid #777; display: flex; align-items: center; justify-content: center; }
.arrow i { border: 3px solid transparent; border-top: 4px solid #000; border-bottom: 0; }
.upload { width: 417px; }
.preview { height: 192px; border: 1px solid #ddd; border-radius: 4px; display: flex; padding: 13px 6px 0 13px; color: #222; margin-bottom: 5px; }
.preview b { margin-left: auto; font: bold 21px/2px "Liberation Sans", sans-serif; color: #ccc; width: 11px; }
.preview span { line-height: 0; margin-top: -1px; letter-spacing: .1px; }
.thumb { width: 162px; height: 164px; border: 1px solid #ddd; box-shadow: 1px 1px 5px 1px #a2958f; margin-right: 8px; padding-top: 2px; }
.note { width: 155px; height: 71px; background: #fff200; color: #000; font: 14px/18px Lato, sans-serif; padding: 3px 0 0 8px; }
.group { height: 34px; display: flex; font-size: 14px; line-height: 30px; border: 1px solid #ccc; border-radius: 4px; }
.name { width: 231px; color: #555; padding-left: 12px; border-right: 1px solid #ccc; }
.del { width: 77px; color: #333; display: flex; align-items: center; padding: 0 0 2px 13px; }
.up { flex: 1; margin: -1px; background: #428bca; border: 1px solid #357ebd; border-radius: 0 4px 4px 0; color: #fff; display: flex; align-items: center; padding: 0 0 2px 12px; gap: 4px; letter-spacing: .1px; }
.editor { width: 640px; height: 400px; border: 1px solid #bbb; border-radius: 4px; }

/* VirtualBox status bar */
.status { height: 21px; flex: none; background: #f0f0f0; display: flex; align-items: center; justify-content: flex-end; font: 11px/16px "DejaVu Sans Condensed", "DejaVu Sans", sans-serif; padding-right: 2px; white-space: nowrap; }
.status span { margin-left: 3px; width: 74px; letter-spacing: -.25px; }

/* annotations drawn over the screen */
.ink { position: absolute; left: 0; top: 0; pointer-events: none; }
.hint { position: absolute; left: 1361px; top: 738px; font: 13.400px/18px Lato, sans-serif; color: #ed1c24; }
```
